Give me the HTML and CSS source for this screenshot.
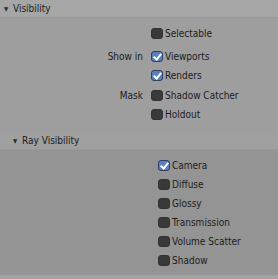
FILE: index.html
```html
<!DOCTYPE html>
<html lang="en">
<head>
    <meta charset="UTF-8">
    <title>Visibility</title>
    <link rel="stylesheet" href="styles.css">
</head>
<body>
    <div class="panel">
        <div class="panel-header">
            <span class="arrow">&#9660;</span>
            <span>Visibility</span>
        </div>
        <div class="panel-body">
            <div class="group first">
                <div class="row">
                    <span class="label"></span>
                    <span class="check"></span>
                    <span class="text">Selectable</span>
                </div>
            </div>
            <div class="group">
                <div class="row">
                    <span class="label">Show in</span>
                    <span class="check on"></span>
                    <span class="text">Viewports</span>
                </div>
                <div class="row">
                    <span class="label"></span>
                    <span class="check on"></span>
                    <span class="text">Renders</span>
                </div>
            </div>
            <div class="group">
                <div class="row">
                    <span class="label">Mask</span>
                    <span class="check"></span>
                    <span class="text">Shadow Catcher</span>
                </div>
                <div class="row">
                    <span class="label"></span>
                    <span class="check"></span>
                    <span class="text">Holdout</span>
                </div>
            </div>
        </div>
        <div class="sub-header">
            <span class="arrow">&#9660;</span>
            <span>Ray Visibility</span>
        </div>
        <div class="sub-body">
            <div class="row"><span class="check on"></span><span class="text">Camera</span></div>
            <div class="row"><span class="check"></span><span class="text">Diffuse</span></div>
            <div class="row"><span class="check"></span><span class="text">Glossy</span></div>
            <div class="row"><span class="check"></span><span class="text">Transmission</span></div>
            <div class="row"><span class="check"></span><span class="text">Volume Scatter</span></div>
            <div class="row"><span class="check"></span><span class="text">Shadow</span></div>
        </div>
        <div class="panel-foot"></div>
    </div>
</body>
</html>
```

FILE: styles.css
```css
body {
    margin: 0;
    padding: 0;
    background: #9e9e9e;
    font-family: "DejaVu Sans Condensed", "DejaVu Sans", sans-serif;
    font-stretch: condensed;
    font-size: 10px;
    color: #1c1c1c;
}
.panel {
    width: 278px;
    height: 279px;
    overflow: hidden;
}
.panel-header {
    height: 18px;
    display: flex;
    align-items: center;
    padding-left: 4px;
    background: #a6a6a6;
    border-bottom: 1px solid #999;
    box-sizing: border-box;
}
.arrow {
    font-size: 6px;
    width: 9px;
    color: #2a2a2a;
}
.panel-body {
    background: #9e9e9e;
    padding-top: 6px;
    height: 114px;
    box-sizing: border-box;
}
.group {
    margin-top: 1px;
}
.group.first {
    margin-top: 0;
    margin-bottom: 4px;
}
.row {
    height: 19px;
    display: flex;
    align-items: center;
}
.label {
    width: 151px;
    text-align: right;
    padding-right: 8px;
    box-sizing: border-box;
}
.check {
    width: 12px;
    height: 11px;
    border-radius: 3px;
    background: #393939;
    border: 1px solid #333;
    box-sizing: border-box;
    margin-right: 2px;
    position: relative;
    flex-shrink: 0;
}
.check.on {
    background: #5a7fbf;
    border-color: #2e3f60;
}
.check.on::after {
    content: "";
    position: absolute;
    left: 3px;
    top: 0px;
    width: 3px;
    height: 6px;
    border: solid #fff;
    border-width: 0 2px 2px 0;
    transform: rotate(40deg);
}
.text {
    white-space: nowrap;
}
.sub-header {
    height: 18px;
    display: flex;
    align-items: center;
    padding-left: 13px;
    background: #a0a0a0;
    border-bottom: 1px solid #9a9a9a;
    box-sizing: border-box;
}
.sub-body {
    background: #949494;
    padding-top: 6px;
    padding-left: 158px;
    height: 125px;
    box-sizing: border-box;
}
.panel-foot {
    height: 4px;
    background: #a3a3a3;
}
```
